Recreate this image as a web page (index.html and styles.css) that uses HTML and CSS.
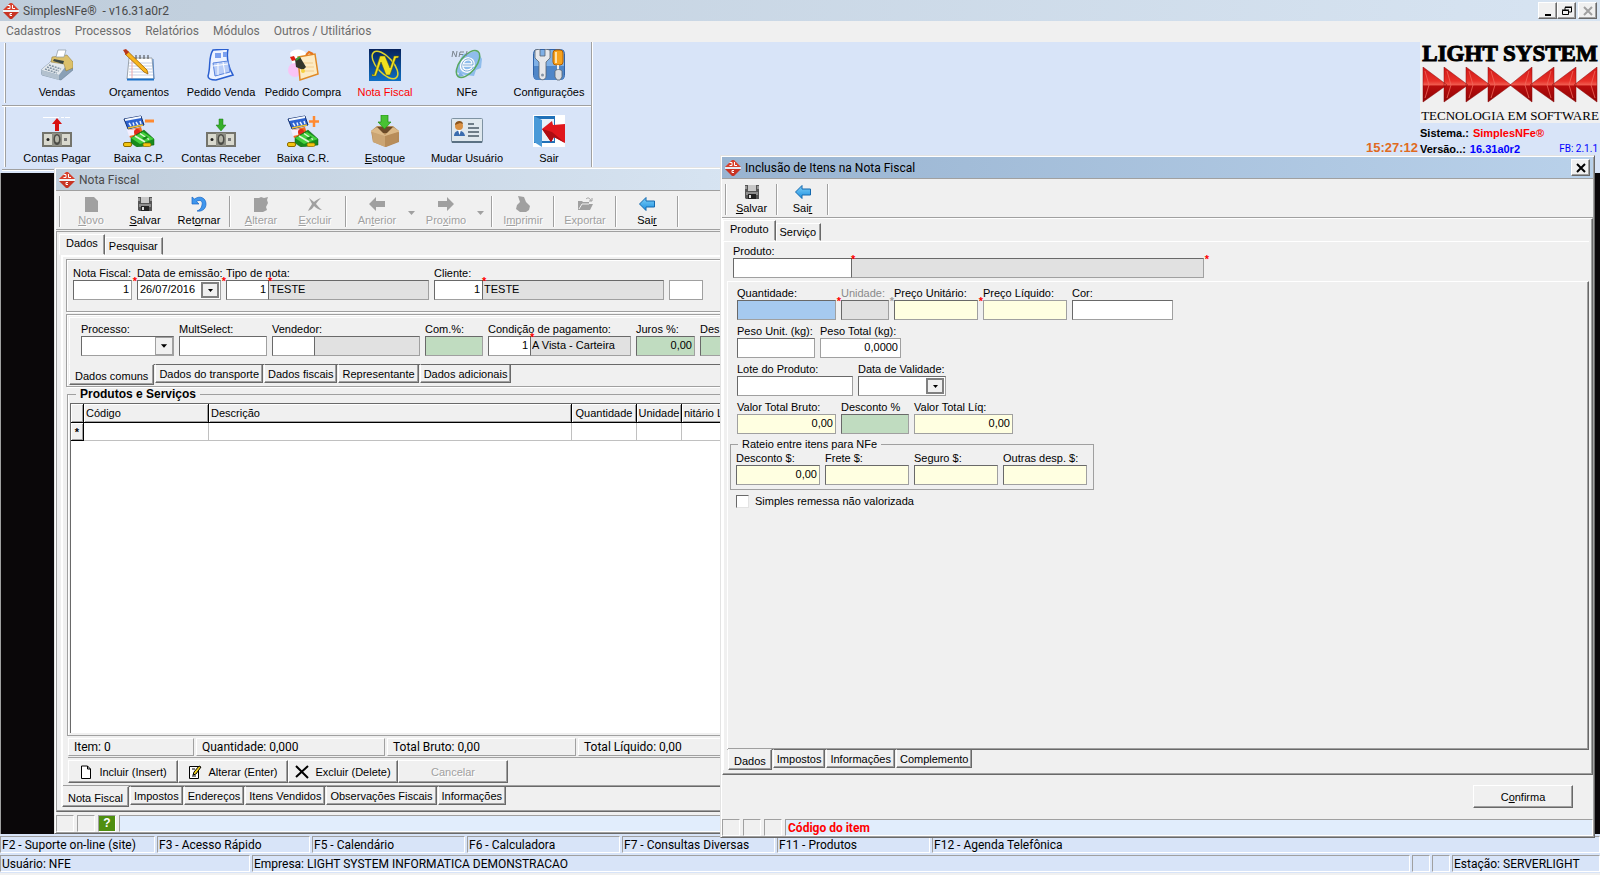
FILE: index.html
```html
<!DOCTYPE html>
<html lang="pt-BR">
<head>
    <meta charset="UTF-8">
    <meta name="viewport" content="width=device-width, initial-scale=1.0">
    <title>SimplesNFe® - v16.31a0r2</title>
    <link rel="stylesheet" href="styles.css">
</head>
<body>
    <!-- Shared icons -->
    <svg class="defs" width="0" height="0">
        <linearGradient id="g-blue" x1="0" y1="0" x2="0" y2="1"><stop offset="0" stop-color="#7fd0f8"/><stop offset="1" stop-color="#1b8fe0"/></linearGradient>
        <linearGradient id="g-red" x1="0" y1="0" x2="0" y2="1"><stop offset="0" stop-color="#d01818"/><stop offset=".4" stop-color="#e83028"/><stop offset=".5" stop-color="#f0584c"/><stop offset=".55" stop-color="#b80c0c"/><stop offset="1" stop-color="#900606"/></linearGradient>
        <linearGradient id="g-nf" x1="0" y1="0" x2="0" y2="1"><stop offset="0" stop-color="#06225c"/><stop offset="1" stop-color="#0f6fc4"/></linearGradient>
        <symbol id="i-logo" viewBox="0 0 16 16">
            <path d="M7 0h2l7 7H0z" fill="#d8402c"/><path d="M0 9h16l-7 7H7z" fill="#c83424"/>
            <path d="M0 8h16" stroke="#fff" stroke-width="1.500"/>
            <path d="M4.500 2.500H7v3H4.500M9.500 2v3.500H12M9 10.500H7v2h2" stroke="#fff" fill="none"/>
        </symbol>
        <symbol id="i-save" viewBox="0 0 16 16">
            <path d="M1 1h14v14H2l-1-1z" fill="#555"/><path d="M4 1h8v6H4z" fill="#c8c8c8"/><path d="M2 8h12v3H2z" fill="#8d8d8d"/>
            <path d="M4 10h8v5H4z" fill="#222"/><path d="M5 11h2v3H5z" fill="#ddd"/><path d="M1 2h2v3H1zM13 2h2v3h-2z" fill="#999"/>
        </symbol>
        <symbol id="i-back" viewBox="0 0 16 16">
            <path d="M.5 8L7 1.500V5h8.500v6H7v3.500z" fill="url(#g-blue)" stroke="#1469ae"/>
        </symbol>
        <symbol id="i-money" viewBox="0 0 30 15">
            <path d="M0 0h30v15H0z" fill="#74746c"/><path d="M2 2h26v11H2z" fill="#d9d9ce"/>
            <path d="M10 1h10v13H10z" fill="#8e8e84"/><ellipse cx="15" cy="7.500" rx="3.500" ry="5.500" fill="#4c4c46"/><ellipse cx="15" cy="7" rx="2" ry="3.500" fill="#b5b5a8"/>
            <circle cx="6" cy="7.500" r="1.500" fill="#222"/><path d="M22 6h3v3h-3z" fill="#777"/>
        </symbol>
        <symbol id="i-cash" viewBox="0 0 32 32">
            <path d="M1 4l17-3 3 9-16 4z" fill="#2c62d0" stroke="#14306e"/><path d="M2 5l16-3" stroke="#f6faff" stroke-width="2"/><path d="M6 8l2 3M10 7.500l1 3M13 7l2 3M17 6l1 3" stroke="#e8f0ff" stroke-width="1.500"/><path d="M5 13l15-3" stroke="#f3c332" stroke-width="1.500"/>
            <path d="M5 15l13-3 2 7-13 4z" fill="#f26a1c"/><path d="M4 15l9-1-2 6-5 1z" fill="#f4efff"/><circle cx="14" cy="17" r="3" fill="#e12a1a"/>
            <path d="M8 23l13-8 10 9v6l-17 2-6-4z" fill="#178a1c" stroke="#0d5c12" stroke-width=".5"/><path d="M8 23l12-6 11 7-14 5z" fill="#43cf3d"/><path d="M12 21l10 6M17 18.500l9 6" stroke="#dff7d6" stroke-width="1.500"/><path d="M19 23l5-2 1 2-4 2z" fill="#178a1c"/>
            <rect x=".5" y="27.500" width="8" height="4" rx="1.500" fill="#f2c410" stroke="#8a6a00"/><rect x="20" y="28" width="8" height="3.500" rx="1.500" fill="#f2c410" stroke="#8a6a00" stroke-width=".7"/>
        </symbol>
        <symbol id="i-down" viewBox="0 0 7 4"><path d="M0 0h7L3.500 4z" fill="currentColor"/></symbol>
    </svg>

    <header class="titlebar app-title">
        <svg class="logo-icon"><use href="#i-logo"/></svg>
        <span class="caption">SimplesNFe® &nbsp;- v16.31a0r2</span>
        <button class="sys" aria-label="Minimizar"><svg viewBox="0 0 12 12"><path d="M3 10h6" stroke="#000" stroke-width="2"/></svg></button>
        <button class="sys" aria-label="Restaurar"><svg viewBox="0 0 12 12"><path d="M4 5V2.500h6.500V7H8M4 2h7" fill="none" stroke="#000"/><path d="M1.500 5.500h6v4h-6zM1 5h7" fill="none" stroke="#000"/></svg></button>
        <button class="sys spaced" aria-label="Fechar" disabled><svg viewBox="0 0 12 12"><path d="M2 2l8 8M10 2l-8 8" stroke="#a0a0a0" stroke-width="2"/></svg></button>
    </header>

    <nav class="menubar">
        <a href="#">Cadastros</a>
        <a href="#">Processos</a>
        <a href="#">Relatórios</a>
        <a href="#">Módulos</a>
        <a href="#">Outros / Utilitários</a>
    </nav>

    <div class="top">
        <div class="bars">
            <div class="bar">
                <button class="big"><svg viewBox="0 0 32 32"><path d="M0 21L14 9l18 4v8L20 31 1 26z" fill="#8aa0b6" stroke="#5d7288" stroke-width=".5"/><path d="M0 21L14 9l14 4-10 13z" fill="#e3e8ec"/><path d="M0 21l18 5v5L1 26z" fill="#b3c1ce"/><path d="M11 8l15-2 6 7v6l-7 3-2-7-13-2z" fill="#dcc06a" stroke="#8a7430" stroke-width=".5"/><path d="M13 10l10 2-1 3-10-3z" fill="#3a4644"/><path d="M17 1h8l-2 7h-8z" fill="#fff" stroke="#8b98a2" stroke-width=".7"/><path d="M8 16l12 4M6 18l12 4M4 20l12 4" stroke="#7d8fa0" stroke-width="1.500" stroke-dasharray="2 1"/></svg><span>Vendas</span></button>
                <button class="big"><svg viewBox="0 0 32 32"><path d="M6 9h23l2 21H4z" fill="#fff" stroke="#9aa3ac"/><path d="M6 14h23M6 17h23M6 20h23M6 23h24M6 26h24" stroke="#c3cfe6"/><path d="M9 10v20" stroke="#f0a8a8"/><path d="M4 30.500h27" stroke="#1a70c9" stroke-width="2"/><path d="M30 10l1 20" stroke="#5b88c0"/><path d="M13 6v4M17 6v4M21 6v4M25 6v4" stroke="#444"/><path d="M2 5l3-2.500L24 21l1 4-4-2z" fill="#f8b51d" stroke="#9c6200" stroke-width=".8"/><path d="M0 1l3-1 3 3-3 3z" fill="#b9371c"/></svg><span>Orçamentos</span></button>
                <button class="big"><svg viewBox="0 0 32 32"><path d="M8 1l15-1c-2 9 1 20 5 26L11 31c-4 0-8-1-8-4C6 18 3 8 8 1z" fill="#eef3ff" stroke="#2a5fd0" stroke-width="1.500"/><path d="M10 4h6v5h-6zM18 3h4v5h-4z" fill="#7ca0ee"/><path d="M8 14l15-2 2 11-15 4z" fill="#b9cdf7" stroke="#5b85de"/><path d="M13 14v12M18 13l2 12M8 17l15-2" stroke="#fff"/></svg><span>Pedido Venda</span></button>
                <button class="big"><svg viewBox="0 0 32 32"><path d="M3 4c5-5 12-4 16 0l10 4-3 15-18 3z" fill="#fff"/><circle cx="8" cy="21" r="7" fill="#f9c4f5"/><path d="M11 8l17-3 3 20-18 6z" fill="#fdebc4" stroke="#e08a26" stroke-width="1.500"/><path d="M16 14h10M15 18h12M16 22h11" stroke="#f3cd8e"/><path d="M19 6l3-3 4 2" stroke="#e8731c" stroke-width="2" fill="none"/><path d="M8 10l5-2 6 10-3 3-7-3z" fill="#33352a"/><path d="M3 8l4-1 2 4-4 1z" fill="#e02010"/><path d="M9 11l4-3" stroke="#3ba23b" stroke-width="2"/><circle cx="16" cy="22" r="2" fill="#f6d040"/></svg><span>Pedido Compra</span></button>
                <button class="big current"><svg viewBox="0 0 32 32"><path d="M0 0h32v32H0z" fill="url(#g-nf)"/><ellipse cx="16" cy="16" rx="17" ry="8" transform="rotate(48 16 16)" fill="none" stroke="#e0d42c" stroke-width="1.500"/><path d="M3 25l2 1L11 7h5l5 12 4-12h5l-1 2h-2l-6 17h-4L12 13 7 27H3z" fill="#f0e020" stroke="#5a5600" stroke-width=".5"/></svg><span>Nota Fiscal</span></button>
                <button class="big"><svg viewBox="0 0 32 32"><path d="M12 5l14-3 5 8-1 9-5 2-2 6-9-1-9-3 2-8z" fill="#8fbdec"/><path d="M9 23l-3 5 7-1z" fill="#7fb0e4"/><path d="M12 16h10c1-8-9-8-11-1-2 8 7 9 11 4" fill="none" stroke="#fff" stroke-width="3.500"/><path d="M12 16h10c1-8-9-8-11-1-2 8 7 9 11 4" fill="none" stroke="#3f82c4" stroke-width=".7"/><ellipse cx="17" cy="15" rx="16" ry="8" transform="rotate(-52 17 15)" fill="none" stroke="#5aa860" stroke-width="1.500"/><path d="M1 8l1-6 3 6 1-6M8 8l1-5h4M9 5.500h3M15 7l1-5" fill="none" stroke="#7b858f"/></svg><span>NFe</span></button>
                <button class="big"><svg viewBox="0 0 32 32"><rect x=".5" y=".5" width="31" height="30" rx="4" fill="#7fb0e6" stroke="#2f62a8"/><path d="M1 17h30v10c0 3-1 4-4 4H5c-3 0-4-1-4-4z" fill="#4f86c8"/><path d="M2 1v8l4 4v14c0 5 7 5 7 0V13l4-4V1l-5-1v7H7V0z" fill="#e6e8ec" stroke="#59636f" stroke-width=".8"/><circle cx="9.500" cy="26" r="1.500" fill="#8795a5"/><rect x="20" y="1" width="10" height="15" rx="3" fill="#f7a21e" stroke="#b25f00"/><path d="M23 3v11" stroke="#ffe0a8" stroke-width="2"/><path d="M25 16v8" stroke="#eee" stroke-width="2"/><path d="M22 22c2-2 5-2 7 0v6l-2 3h-3l-2-3z" fill="#d9dde2" stroke="#59636f" stroke-width=".8"/></svg><span>Configurações</span></button>
            </div>
            <div class="bar">
                <button class="big"><svg viewBox="0 0 32 32"><path d="M2 2.500h27" stroke="#fff" stroke-dasharray="16 2 3 1"/><use href="#i-money" x="1" y="17" width="30" height="15"/><path d="M16 3l5 6h-3v7h-4V9h-3z" fill="#d81010"/></svg><span>Contas Pagar</span></button>
                <button class="big"><svg viewBox="0 0 32 32"><use href="#i-cash" width="32" height="32"/><path d="M22 6h9" stroke="#ff8a30" stroke-width="3"/></svg><span>Baixa C.P.</span></button>
                <button class="big"><svg viewBox="0 0 32 32"><use href="#i-money" x="1" y="17" width="30" height="15"/><path d="M16 16l5-6h-3V4h-4v6h-3z" fill="#35b02a" stroke="#1c7a14" stroke-width=".5"/></svg><span>Contas Receber</span></button>
                <button class="big"><svg viewBox="0 0 32 32"><use href="#i-cash" width="32" height="32"/><path d="M22 6.500h10M27 1v11" stroke="#ff8a30" stroke-width="2.500"/></svg><span>Baixa C.R.</span></button>
                <button class="big"><svg viewBox="0 0 32 32"><path d="M2 16l6-5h16l6 5v11l-13 5-13-5z" fill="#b48a58"/><path d="M7 12h18l-4 6H9z" fill="#6b4a28"/><path d="M2 16l6-4 8 8v2L2 17zM30 16l-6-4-8 8v2l14-5z" fill="#dcb988"/><path d="M3 17l13 4v11L4 27z" fill="#cba574"/><path d="M16 21l13-4-1 10-12 5z" fill="#b88d5a"/><path d="M12 0h7v7h3l-6.500 7L9 7h3z" fill="#48c232" stroke="#1f8a14" stroke-width=".7"/></svg><span><u>E</u>stoque</span></button>
                <button class="big"><svg viewBox="0 0 32 32"><rect x=".5" y="3.500" width="31" height="24" rx="1" fill="#dfe8ee" stroke="#7f93a3"/><path d="M1 27h30" stroke="#5b7183" stroke-width="2"/><circle cx="8" cy="11" r="4" fill="#d89042"/><path d="M4 10c0-5 8-5 8-1l-3-1z" fill="#8a541c"/><path d="M3 21c0-7 10-7 11 0z" fill="#3a6cae"/><path d="M7 15l1.500 5 1.500-5z" fill="#fff"/><path d="M17 9h6M17 13h11M17 17h11M17 21h11" stroke="#4a5a66" stroke-width="1.500"/></svg><span>Mudar Usuário</span></button>
                <button class="big"><svg viewBox="0 0 32 32"><path d="M0 0h32v32H0z" fill="#fff"/><path d="M1 1h21v27H1z" fill="#1f70b8"/><path d="M6 4h15v22H6z" fill="#e8f1fa"/><path d="M1 1l8 4v27l-8-5z" fill="#4a9ad8"/><path d="M9 14l10-8 1 4 12-1v19l-11-6-3 5z" fill="#e0161c"/><path d="M9 14l10 3 13 11-11-6-3 5z" fill="#ad0c12"/></svg><span>Sair</span></button>
            </div>
        </div>

        <div class="brand">
            <span class="clock">15:27:12</span>
            <div class="brand-box">
                <div class="brand-logo">
                    <div class="brand-name">LIGHT SYSTEM</div>
                    <svg class="arrows" viewBox="0 0 176 36">
                        <g fill="url(#g-red)" stroke="#8a0a0a" stroke-width=".5">
                            <path d="M1 0l24 18L1 35zM22 0l24 18-24 17zM44 0l24 18-24 17zM66 0l23 18-23 17z"/>
                            <path d="M110 0L88 18l22 17zM132 0l-24 18 24 17zM154 0l-24 18 24 17zM175 0l-23 18 23 17z"/>
                        </g>
                        <path d="M3 4l4 14-4 13M25 4l4 14-4 13M47 4l4 14-4 13M69 4l4 14-4 13M107 4l-4 14 4 13M129 4l-4 14 4 13M151 4l-4 14 4 13M173 4l-4 14 4 13" fill="none" stroke="#f0685c" stroke-width=".8"/>
                    </svg>
                    <div class="brand-sub">TECNOLOGIA EM SOFTWARE</div>
                </div>
                <div class="sysinfo">Sistema.: <b class="red">SimplesNFe®</b></div>
                <div class="sysinfo">Versão..: <b class="blue">16.31a0r2</b><span class="fb">FB: 2.1.1</span></div>
            </div>
        </div>
    </div>

    <main class="desktop"></main>

    <!-- Nota Fiscal -->
    <section class="window win-nota">
        <header class="titlebar">
            <svg class="logo-icon"><use href="#i-logo"/></svg>
            <span class="caption">Nota Fiscal</span>
        </header>
        <div class="toolbar">
            <i class="sep"></i>
            <button class="tool" disabled><svg viewBox="0 0 16 16"><path d="M2 1h9l4 4v11H2z" fill="#a0a0a0"/></svg><span><u>N</u>ovo</span></button>
            <button class="tool"><svg><use href="#i-save"/></svg><span><u>S</u>alvar</span></button>
            <button class="tool"><svg viewBox="0 0 16 16"><path d="M1 1v7h7L5.500 5.500C9 3 12 5 11 9c-.5 3-2 5-5 6 6 1 9-3 9-7 0-6-6-9-11.500-5z" fill="#3f97ee" stroke="#1a66c4" stroke-width=".7"/></svg><span>Ret<u>o</u>rnar</span></button>
            <i class="sep"></i>
            <button class="tool" disabled><svg viewBox="0 0 16 16"><path d="M1 2l5 0 2-1 3 1 4-1-1 3 1 3-2 4 1 3-4 2H1z" fill="#a0a0a0"/></svg><span><u>A</u>lterar</span></button>
            <button class="tool" disabled><svg viewBox="0 0 16 16"><path d="M2 2l5 4c2-2 4-3 7-4-2 2-4 4-5 6 2 2 3 4 6 6-3 0-6-2-8-4-1 2-3 4-6 5 1-3 3-5 4-7z" fill="#a0a0a0"/></svg><span><u>E</u>xcluir</span></button>
            <i class="sep"></i>
            <button class="tool" disabled><svg viewBox="0 0 16 16"><path d="M0 8l7-7v4h9v6H7v4z" fill="#a0a0a0"/></svg><span>An<u>t</u>erior</span></button>
            <button class="drop" disabled aria-label="Anterior: opções"><svg><use href="#i-down"/></svg></button>
            <button class="tool" disabled><svg viewBox="0 0 16 16"><path d="M16 8L9 1v4H0v6h9v4z" fill="#a0a0a0"/></svg><span>Pro<u>x</u>imo</span></button>
            <button class="drop" disabled aria-label="Proximo: opções"><svg><use href="#i-down"/></svg></button>
            <i class="sep"></i>
            <button class="tool" disabled><svg viewBox="0 0 16 16"><path d="M3 0l6 1 2 5 4 4-1 4-3 2H5l-4-3 1-4 3-3z" fill="#a0a0a0"/></svg><span>I<u>m</u>primir</span></button>
            <i class="sep"></i>
            <button class="tool" disabled><svg viewBox="0 0 16 16"><path d="M1 5h4l1 1h6v2h4l-3 6H1z" fill="#a0a0a0"/><path d="M2 13l3-5h7" stroke="#f0f0f0" fill="none"/><path d="M9 3c2-2 4-1 5 2M15 2v3h-3" stroke="#a0a0a0" fill="none"/></svg><span>Exportar</span></button>
            <i class="sep"></i>
            <button class="tool"><svg><use href="#i-back"/></svg><span>Sai<u>r</u></span></button>
            <i class="sep"></i>
        </div>

        <div class="tabbox">
            <div class="tabs-top">
                <button class="tab active">Dados</button>
                <button class="tab">Pesquisar</button>
            </div>
            <div class="page">
                <div class="subpage">
                    <div class="panel head-panel">
                        <div class="field"><label for="nf">Nota Fiscal:</label><input id="nf" class="num w-59" value="1"><i class="req">*</i></div>
                        <div class="field"><label for="emissao">Data de emissão:</label><div class="box w-84"><input id="emissao" value="26/07/2016"><button class="date-btn" aria-label="Abrir calendário"><svg><use href="#i-down"/></svg></button></div><i class="req">*</i></div>
                        <div class="field"><label for="tipo">Tipo de nota:</label><div class="pair"><input id="tipo" class="num w-42" value="1"><i class="req">*</i><input class="ro w-161" value="TESTE" readonly aria-label="Descrição do tipo"></div></div>
                        <div class="field"><label for="cliente">Cliente:</label><div class="pair"><input id="cliente" class="num w-48" value="1"><i class="req">*</i><input class="ro w-182" value="TESTE" readonly aria-label="Nome do cliente"></div></div>
                        <div class="field bottom"><input class="flat w-34" aria-label="UF"></div>
                    </div>
                    <div class="panel common-panel">
                        <div class="common-page">
                            <div class="field"><label for="processo">Processo:</label><div class="combo"><select id="processo" class="w-93"><option></option></select><svg viewBox="0 0 17 18"><path d="M5 7h7l-3.500 4z"/></svg></div></div>
                            <div class="field"><label for="mult">MultSelect:</label><input id="mult" class="w-88"></div>
                            <div class="field"><label for="vend">Vendedor:</label><div class="pair"><input id="vend" class="w-42"><input class="ro w-106" readonly aria-label="Nome do vendedor"></div></div>
                            <div class="field"><label for="com">Com.%:</label><input id="com" class="green w-58"></div>
                            <div class="field"><label for="cond">Condição de pagamento:</label><div class="pair"><input id="cond" class="num w-42" value="1"><i class="req">*</i><input class="ro w-101" value="A Vista - Carteira" readonly aria-label="Descrição da condição"></div></div>
                            <div class="field"><label for="juros">Juros %:</label><input id="juros" class="green num w-59" value="0,00"></div>
                            <div class="field"><label for="desc">Des</label><input id="desc" class="green w-59"></div>
                        </div>
                        <div class="tabs-bottom">
                            <button class="tab active">Dados comuns</button>
                            <button class="tab">Dados do transporte</button>
                            <button class="tab">Dados fiscais</button>
                            <button class="tab">Representante</button>
                            <button class="tab">Dados adicionais</button>
                        </div>
                    </div>
                    <fieldset class="items">
                        <legend>Produtos e Serviços</legend>
                        <div class="grid">
                            <table>
                                <colgroup><col class="c-mark"><col class="c-cod"><col class="c-desc"><col class="c-qtd"><col class="c-un"><col></colgroup>
                                <thead>
                                    <tr><th></th><th>Código</th><th>Descrição</th><th class="center">Quantidade</th><th class="center">Unidade</th><th>nitário L</th></tr>
                                </thead>
                                <tbody>
                                    <tr><th>*</th><td></td><td></td><td></td><td></td><td></td></tr>
                                </tbody>
                            </table>
                        </div>
                    </fieldset>
                    <div class="totals">
                        <span>Item: 0</span>
                        <span>Quantidade: 0,000</span>
                        <span>Total Bruto: 0,00</span>
                        <span>Total Líquido: 0,00</span>
                    </div>
                    <div class="actions">
                        <button class="btn"><svg viewBox="0 0 14 14"><path d="M2.500 1h6l3 3v9.500h-9zM8.500 1v3h3" fill="#fff" stroke="#000"/></svg>Incluir (Insert)</button>
                        <button class="btn"><svg viewBox="0 0 14 14"><path d="M1.500 1.500h9v12h-9z" fill="#fff" stroke="#000"/><path d="M5 10l1-3 5-6 2 1-5 7z" fill="#f3d21c" stroke="#000"/><path d="M4 4h3M4 11h4" stroke="#000"/></svg>Alterar (Enter)</button>
                        <button class="btn"><svg viewBox="0 0 14 14"><path d="M1 1l12 12M13 1L1 12" stroke="#000" stroke-width="2"/></svg>Excluir (Delete)</button>
                        <button class="btn" disabled>Cancelar</button>
                    </div>
                </div>
                <div class="tabs-bottom">
                    <button class="tab active">Nota Fiscal</button>
                    <button class="tab">Impostos</button>
                    <button class="tab">Endereços</button>
                    <button class="tab">Itens Vendidos</button>
                    <button class="tab">Observações Fiscais</button>
                    <button class="tab">Informações</button>
                </div>
            </div>
        </div>
        <footer class="win-status">
            <span class="cell"></span><span class="cell"></span><span class="cell help">?</span><span class="cell hint"></span>
        </footer>
    </section>

    <!-- Inclusão de itens -->
    <section class="window win-item">
        <header class="titlebar active">
            <svg class="logo-icon"><use href="#i-logo"/></svg>
            <span class="caption">Inclusão de Itens na Nota Fiscal</span>
            <button class="sys" aria-label="Fechar"><svg viewBox="0 0 12 12"><path d="M2 2l8 8M10 2l-8 8" stroke="#000" stroke-width="2"/></svg></button>
        </header>
        <div class="toolbar compact">
            <i class="sep"></i>
            <button class="tool"><svg><use href="#i-save"/></svg><span><u>S</u>alvar</span></button>
            <i class="sep"></i>
            <button class="tool"><svg><use href="#i-back"/></svg><span>Sai<u>r</u></span></button>
            <i class="sep"></i>
        </div>
        <div class="tabbox">
            <div class="tabs-top">
                <button class="tab active">Produto</button>
                <button class="tab">Serviço</button>
            </div>
            <div class="page">
                <div class="row product-row">
                    <div class="field"><label for="produto">Produto:</label><div class="pair"><input id="produto" class="w-118" autofocus><i class="req">*</i><input class="ro w-353" readonly aria-label="Descrição do produto"></div><i class="req">*</i></div>
                </div>
                <div class="subpage">
                    <div class="row">
                        <div class="field"><label for="qtd">Quantidade:</label><input id="qtd" class="focus w-99"><i class="req">*</i></div>
                        <div class="field off"><label for="un">Unidade:</label><input id="un" class="ro w-48" disabled><i class="req">*</i></div>
                        <div class="field"><label for="pu">Preço Unitário:</label><input id="pu" class="yellow w-84"><i class="req">*</i></div>
                        <div class="field"><label for="pl">Preço Líquido:</label><input id="pl" class="yellow flat w-84"></div>
                        <div class="field"><label for="cor">Cor:</label><input id="cor" class="w-101"></div>
                    </div>
                    <div class="row">
                        <div class="field"><label for="pesou">Peso Unit. (kg):</label><input id="pesou" class="w-78"></div>
                        <div class="field"><label for="pesot">Peso Total (kg):</label><input id="pesot" class="flat num w-81" value="0,0000"></div>
                    </div>
                    <div class="row">
                        <div class="field"><label for="lote">Lote do Produto:</label><input id="lote" class="w-116"></div>
                        <div class="field"><label for="valid">Data de Validade:</label><div class="box w-88"><input id="valid"><button class="date-btn" aria-label="Abrir calendário"><svg><use href="#i-down"/></svg></button></div></div>
                    </div>
                    <div class="row">
                        <div class="field"><label for="vtb">Valor Total Bruto:</label><input id="vtb" class="yellow flat num w-99" value="0,00"></div>
                        <div class="field"><label for="descp">Desconto %</label><input id="descp" class="green w-68"></div>
                        <div class="field"><label for="vtl">Valor Total Líq:</label><input id="vtl" class="yellow flat num w-99" value="0,00"></div>
                    </div>
                    <fieldset class="rateio">
                        <legend>Rateio entre itens para NFe</legend>
                        <div class="row">
                            <div class="field"><label for="rd">Desconto $:</label><input id="rd" class="yellow num w-84" value="0,00"></div>
                            <div class="field"><label for="rf">Frete $:</label><input id="rf" class="yellow w-84"></div>
                            <div class="field"><label for="rs">Seguro $:</label><input id="rs" class="yellow w-84"></div>
                            <div class="field"><label for="ro">Outras desp. $:</label><input id="ro" class="yellow w-84"></div>
                        </div>
                    </fieldset>
                    <label class="check"><input type="checkbox">Simples remessa não valorizada</label>
                </div>
                <div class="tabs-bottom">
                    <button class="tab active">Dados</button>
                    <button class="tab">Impostos</button>
                    <button class="tab">Informações</button>
                    <button class="tab">Complemento</button>
                </div>
            </div>
        </div>
        <div class="confirm">
            <button class="btn"><span>C<u>o</u>nfirma</span></button>
        </div>
        <footer class="win-status">
            <span class="cell"></span><span class="cell"></span><span class="cell"></span><span class="cell hint">Código do item</span>
        </footer>
    </section>

    <footer class="status">
        <div class="keys">
            <span>F2 - Suporte on-line (site)</span>
            <span>F3 - Acesso Rápido</span>
            <span>F5 - Calendário</span>
            <span>F6 - Calculadora</span>
            <span>F7 - Consultas Diversas</span>
            <span>F11 - Produtos</span>
            <span>F12 - Agenda Telefônica</span>
        </div>
        <div class="session">
            <span class="user">Usuário: NFE</span>
            <span class="company">Empresa: LIGHT SYSTEM INFORMATICA DEMONSTRACAO</span>
            <span class="led"></span>
            <span class="led"></span>
            <span class="station">Estação: SERVERLIGHT</span>
        </div>
    </footer>
</body>
</html>
```
FILE: styles.css
```css
* {
    box-sizing: border-box;
}
body {
    margin: 0;
    min-height: 100vh;
    display: flex;
    flex-direction: column;
    position: relative;
    overflow: hidden;
    background: #f0f0f0;
    color: #000;
    font: 11px/14px "Liberation Sans", Arial, sans-serif;
}
button, input, select {
    font: inherit;
    color: inherit;
    margin: 0;
    padding: 0;
    border: 0;
    border-radius: 0;
    background: none;
    outline: none;
}
.defs {
    position: absolute;
}

/* Title bars and menu */
.titlebar {
    display: flex;
    align-items: center;
    height: 21px;
    flex: none;
    padding: 0 3px;
    background: linear-gradient(90deg, #bfcddb, #d7e4f2);
    color: #4a4a4a;
}
.titlebar.active {
    background: linear-gradient(90deg, #99b4d1, #b9d1ea);
    color: #000;
}
.logo-icon {
    width: 16px;
    height: 16px;
}
.caption {
    flex: 1;
    padding-left: 4px;
    font: 12px/16px Roboto, "Open Sans", sans-serif;
}
.sys {
    width: 19px;
    height: 17px;
    display: flex;
    align-items: center;
    justify-content: center;
    background: #f0f0f0;
    border: 1px solid;
    border-color: #fff #696969 #696969 #fff;
    box-shadow: inset -1px -1px #a0a0a0;
}
.sys.spaced {
    margin-left: 2px;
}
.sys svg {
    width: 12px;
    height: 12px;
}
.menubar {
    display: flex;
    gap: 14px;
    height: 21px;
    flex: none;
    padding-left: 6px;
    font: 12px/21px Roboto, "Open Sans", sans-serif;
}
.menubar a {
    color: #6d6d6d;
    text-decoration: none;
}

/* Main toolbar */
.top {
    display: flex;
    justify-content: space-between;
    height: 131px;
    flex: none;
    background: #d8e4f8;
}
.bars {
    height: 128px;
    border-right: 1px solid #a0a0a0;
    box-shadow: 1px 0 #fff;
}
.bar {
    display: flex;
    height: 64px;
    margin-left: 2px;
    padding: 7px 1px 0 14px;
    border-bottom: 1px solid #a0a0a0;
    box-shadow: 0 1px #fff;
    background: linear-gradient(90deg, #fff 50%, #a0a0a0 50%) 2px 1px / 2px 60px no-repeat;
}
.bar + .bar {
    padding-top: 9px;
}
.big {
    width: 82px;
    height: 50px;
    display: flex;
    flex-direction: column;
    align-items: center;
    gap: 4px;
}
.big svg {
    width: 32px;
    height: 32px;
}
.big.current {
    color: #f00;
}
.brand {
    display: flex;
    align-items: flex-start;
    gap: 2px;
}
.clock {
    padding-top: 99px;
    font-size: 13px;
    font-weight: bold;
    color: #e06a20;
}
.brand-box {
    width: 180px;
}
.brand-logo {
    height: 81px;
    margin-bottom: 2px;
    background: #f0f0f0;
    font-family: "Liberation Serif", serif;
    text-align: center;
    white-space: nowrap;
}
.brand-name {
    font-size: 23px;
    line-height: 24px;
    font-weight: bold;
    -webkit-text-stroke: 1px #000;
}
.arrows {
    display: block;
    width: 176px;
    height: 36px;
    margin: 1px 2px 3px;
}
.brand-sub {
    font-size: 13px;
    line-height: 20px;
}
.sysinfo {
    font-weight: bold;
    line-height: 16px;
    display: flex;
    gap: 4px;
}
.red {
    color: #f00;
}
.blue {
    color: #00f;
}
.fb {
    margin: 0 2px 0 auto;
    font: 10px/16px Roboto, "Open Sans", sans-serif;
    color: #00f;
}
.desktop {
    flex: 1;
    background: #0a0709;
    border-left: 1px solid #a0a0a0;
}

/* Windows */
.window {
    position: absolute;
    display: flex;
    flex-direction: column;
    background: #f0f0f0;
    border: 1px solid;
    border-color: #e3e3e3 #696969 #696969 #e3e3e3;
    box-shadow: inset 1px 1px #fff, inset -1px -1px #a0a0a0;
    padding: 1px;
    overflow: hidden;
}
.win-nota {
    left: 54px;
    right: 54%;
    top: 167px;
    bottom: 41px;
}
.win-item {
    left: 45%;
    right: 5px;
    top: 155px;
    bottom: 37px;
}
.toolbar {
    display: flex;
    flex: none;
    height: 40px;
    padding-top: 5px;
    border-top: 1px solid #a0a0a0;
    border-bottom: 1px solid #a0a0a0;
}
.sep {
    flex: none;
    width: 2px;
    height: 31px;
    margin: 0 3px;
    background: linear-gradient(90deg, #a0a0a0 50%, #fff 50%);
}
.tool {
    flex: none;
    width: 54px;
    height: 32px;
    display: flex;
    flex-direction: column;
    align-items: center;
    gap: 1px;
}
.compact .tool {
    width: 43px;
}
.tool svg {
    width: 16px;
    height: 16px;
}
.drop {
    flex: none;
    width: 15px;
    height: 30px;
}
.drop svg {
    width: 7px;
    height: 4px;
}
.toolbar :disabled {
    color: #a0a0a0;
    text-shadow: 1px 1px #fff;
}

/* Tabs */
.tabbox {
    flex: 1;
    min-height: 0;
    display: flex;
    flex-direction: column;
    margin-top: 1px;
    border: 1px solid;
    border-color: #a0a0a0 #696969 #696969 #a0a0a0;
    box-shadow: inset -1px -1px #a0a0a0;
}
.tabs-top {
    display: flex;
    align-items: flex-end;
    flex: none;
    padding: 2px 0 0 2px;
    height: 23px;
}
.tabs-top .tab {
    height: 18px;
    padding: 0 4px 1px 3px;
    border: 1px solid;
    border-color: #fff #696969 transparent #fff;
    box-shadow: inset -1px 0 #a0a0a0;
}
.tabs-top .tab.active {
    height: 21px;
    padding: 0 6px 3px 6px;
}
.page {
    flex: 1;
    min-height: 0;
    display: flex;
    flex-direction: column;
    margin: 0 4px 4px 4px;
    border-top: 1px solid #fff;
    border-left: 1px solid #fff;
}
.subpage {
    flex: 1;
    min-height: 0;
    display: flex;
    flex-direction: column;
    border: 1px solid;
    border-color: #fff #696969 #696969 #fff;
    box-shadow: inset -1px -1px #a0a0a0;
}
.tabs-bottom {
    display: flex;
    flex: none;
    gap: 1px;
    height: 21px;
    margin-top: -1px;
}
.tabs-bottom .tab {
    height: 19px;
    padding: 0 3px;
    white-space: nowrap;
    border: 1px solid;
    border-color: #696969 #696969 #696969 #fff;
    box-shadow: inset -1px -1px #a0a0a0;
}
.tabs-bottom .tab.active {
    height: 21px;
    padding: 3px 5px 0;
    background: #f0f0f0;
    border-color: #f0f0f0 #696969 #696969 #fff;
}

/* Form fields */
.field {
    position: relative;
    flex: none;
    display: flex;
    flex-direction: column;
}
.field label {
    white-space: nowrap;
    width: 0;
}
.field.bottom {
    justify-content: flex-end;
}
.field.off {
    color: #8a8a8a;
}
.pair {
    display: flex;
    position: relative;
}
.field input, .field select, .box {
    height: 20px;
    padding: 0 2px 3px;
    background: #fff;
    border: 1px solid;
    border-color: #696969 #a0a0a0 #a0a0a0 #696969;
}
.field .flat {
    border-color: #a0a0a0;
}
.field .num {
    text-align: right;
}
.field .ro {
    background: #e1e1e1;
}
.pair .ro {
    padding-left: 1px;
    border-left-color: #696969;
}
.pair input:first-child {
    border-right: 0;
}
.field .green {
    background: #c0dcc0;
}
.field .yellow {
    background: #ffffe1;
}
.field .focus {
    background: #a6caf0;
}
.box {
    display: flex;
    padding: 0 1px 0 0;
}
.field .box input {
    flex: 1;
    min-width: 0;
    height: 18px;
    border: 0;
}
.date-btn {
    width: 18px;
    height: 16px;
    margin-top: 1px;
    display: flex;
    align-items: center;
    justify-content: center;
    background: #f0f0f0;
    border: 2px solid #808080;
}
.date-btn svg {
    width: 5px;
    height: 3px;
}
.combo {
    position: relative;
}
.field .combo select {
    display: block;
    appearance: none;
}
.combo svg {
    position: absolute;
    right: 1px;
    top: 1px;
    width: 18px;
    height: 18px;
    background: #f0f0f0;
    border: 1px solid #a0a0a0;
    pointer-events: none;
}
.req {
    position: absolute;
    right: -5px;
    top: 9px;
    font: bold 11px/12px "Liberation Sans", sans-serif;
    color: #f00;
}
.pair .req {
    position: relative;
    width: 0;
    right: 0;
    top: -5px;
}
.off .req {
    color: #a0a0a0;
}
.w-34 { width: 34px; }
.w-42 { width: 42px; }
.w-48 { width: 48px; }
.w-58 { width: 58px; }
.w-59 { width: 59px; }
.w-68 { width: 68px; }
.w-78 { width: 78px; }
.w-81 { width: 81px; }
.w-84 { width: 84px; }
.w-88 { width: 88px; }
.w-93 { width: 93px; }
.w-99 { width: 99px; }
.w-101 { width: 101px; }
.w-106 { width: 106px; }
.w-116 { width: 116px; }
.w-118 { width: 118px; }
.w-161 { width: 161px; }
.w-182 { width: 182px; }
.w-353 { width: 353px; }

/* Nota Fiscal contents */
.panel {
    flex: none;
    border: 1px solid #a0a0a0;
    box-shadow: inset 1px 1px #fff, 1px 1px #fff;
}
.head-panel {
    display: flex;
    gap: 5px;
    height: 53px;
    margin: 2px 2px 1px 3px;
    padding: 6px 0 0 6px;
    align-items: flex-start;
}
.head-panel .bottom {
    height: 34px;
}
.common-panel {
    height: 73px;
    margin: 1px 2px 0 3px;
    padding: 2px 2px 0;
}
.common-page {
    display: flex;
    gap: 5px;
    height: 48px;
    padding: 4px 0 0 11px;
    border: 1px solid;
    border-color: #fff #696969 #696969 #fff;
}
.items {
    flex: 1;
    min-height: 0;
    min-width: 0;
    display: flex;
    margin: 0 2px 0 4px;
    padding: 2px 1px 2px 2px;
    border: 1px solid #a0a0a0;
    box-shadow: inset 1px 0 #fff;
}
.items legend {
    font-weight: bold;
    font-size: 12px;
    line-height: 14px;
    margin-left: 6px;
    padding: 0 4px;
}
.grid {
    flex: 1;
    min-width: 0;
    background: #fff;
    border-top: 1px solid #696969;
    border-left: 1px solid #696969;
    overflow: hidden;
}
.grid table {
    width: 100%;
    table-layout: fixed;
    border-collapse: separate;
    border-spacing: 0;
}
.grid th {
    height: 19px;
    padding: 0 2px;
    text-align: left;
    font-weight: normal;
    white-space: nowrap;
    background: #f0f0f0;
    border-right: 1px solid #000;
    border-bottom: 1px solid #000;
    box-shadow: inset 1px 1px #fff, inset -1px -1px #a0a0a0;
}
.grid tbody th {
    height: 18px;
    text-align: center;
    font-weight: bold;
}
.grid th.center {
    padding: 0;
    text-align: center;
}
.grid td {
    border-right: 1px solid #c0c0c0;
    border-bottom: 1px solid #c0c0c0;
}
.c-mark { width: 13px; }
.c-cod { width: 125px; }
.c-desc { width: 363px; }
.c-qtd { width: 65px; }
.c-un { width: 45px; }
.totals {
    flex: none;
    display: flex;
    gap: 2px;
    height: 20px;
    margin: 2px 0 2px 5px;
    border-bottom: 1px solid #a0a0a0;
    font: 12px/16px Roboto, "Open Sans", sans-serif;
}
.totals span {
    flex: none;
    width: 189px;
    height: 18px;
    padding-left: 5px;
    border: 1px solid;
    border-color: #fff #a0a0a0 #a0a0a0 #fff;
}
.totals span:first-child {
    width: 126px;
}
.actions {
    flex: none;
    display: flex;
    height: 26px;
    margin-left: 5px;
}
.btn {
    display: flex;
    align-items: center;
    justify-content: center;
    gap: 6px;
    width: 110px;
    height: 23px;
    background: #f0f0f0;
    border: 1px solid;
    border-color: #fff #696969 #696969 #fff;
    box-shadow: inset -1px -1px #a0a0a0;
}
.btn svg {
    width: 14px;
    height: 14px;
}
.btn:disabled {
    color: #a0a0a0;
    text-shadow: 1px 1px #fff;
}
.win-status {
    flex: none;
    display: flex;
    gap: 3px;
    height: 20px;
    padding-top: 3px;
}
.cell {
    width: 18px;
    height: 17px;
    border: 1px solid;
    border-color: #a0a0a0 #fff #fff #a0a0a0;
}
.cell.help {
    background: #4f8f10;
    color: #fff;
    font-weight: bold;
    font-size: 12px;
    text-align: center;
}
.cell.hint {
    flex: 1;
    padding-left: 2px;
    background: #e1edfc;
    color: #f00;
    font: bold 12px/16px Roboto, "Open Sans", sans-serif;
}

/* Item dialog */
.row {
    display: flex;
    gap: 5px;
    flex: none;
}
.win-item .tabs-top {
    height: 22px;
    padding: 0;
}
.win-item .tabbox {
    margin: 0;
    border-color: #fff #696969 #696969 #fff;
}
.win-item .page {
    margin: 0 3px 4px 0;
}
.product-row {
    padding: 2px 0 3px 9px;
}
.win-item .subpage {
    margin-left: 3px;
}
.win-item .subpage > .row {
    padding: 4px 0 0 9px;
}
.rateio {
    width: 364px;
    margin: 3px 0 0 2px;
    padding: 0 0 4px 5px;
    border: 1px solid #a0a0a0;
}
.rateio legend {
    margin-left: 2px;
    padding: 0 4px;
}
.check {
    display: flex;
    align-items: center;
    gap: 6px;
    margin: 4px 0 0 8px;
}
.check input {
    appearance: none;
    width: 13px;
    height: 13px;
    background: #fff;
    border: 1px solid;
    border-color: #696969 #e3e3e3 #e3e3e3 #696969;
}
.win-item .tabs-bottom {
    margin-left: 4px;
}
.confirm {
    flex: none;
    display: flex;
    justify-content: flex-end;
    padding: 10px 20px 8px;
}
.confirm .btn {
    width: 100px;
}

/* Status bars */
.status {
    flex: none;
    padding-top: 2px;
    height: 41px;
    background: #d8e4f8;
    border-bottom: 2px solid #f0f0f0;
    font: 12px/16px Roboto, "Open Sans", sans-serif;
}
.keys, .session {
    display: flex;
    gap: 2px;
    height: 17px;
    margin-bottom: 2px;
}
.status span {
    flex: none;
    padding-left: 1px;
    white-space: nowrap;
    border: 1px solid;
    border-color: #a0a0a0 #fff #fff #a0a0a0;
}
.keys span {
    width: 153px;
}
.keys span:first-child {
    width: 155px;
}
.keys span:last-child,
.status .company {
    flex: 1;
}
.user {
    width: 250px;
}
.led {
    width: 18px;
}
.station {
    width: 148px;
}
```
